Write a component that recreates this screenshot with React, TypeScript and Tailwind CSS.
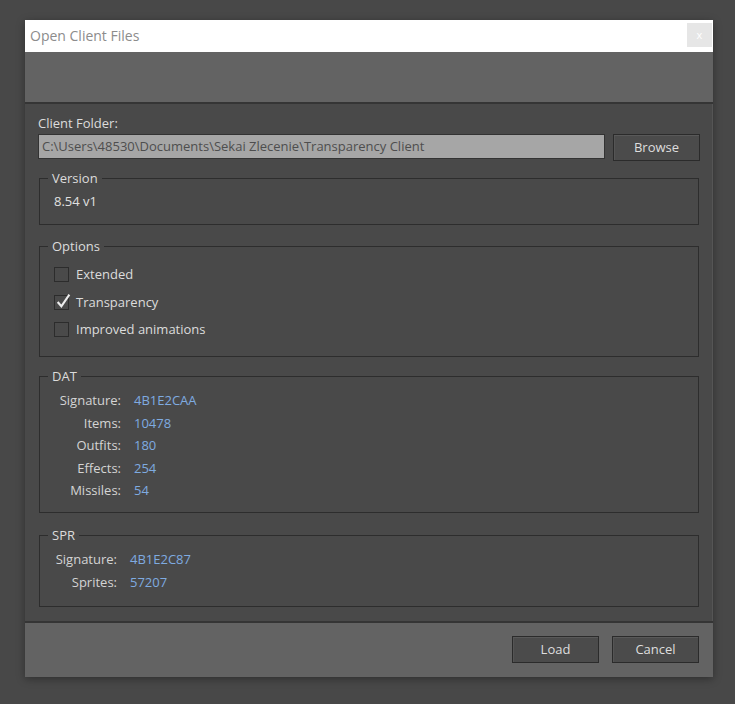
import React from "react";

const font = { fontFamily: '"Open Sans", "Noto Sans", "Liberation Sans", sans-serif' };

function Check({ checked, label }: { checked?: boolean; label: string }) {
  return (
    <div className="flex h-[27.5px] items-center">
      <div className="relative ml-[14px] flex h-[15px] w-[15px] items-center justify-center border border-[#2c2c2c] bg-[#4a4a4a]">
        {checked && (
          <svg viewBox="0 0 16 16" className="absolute -top-[3px] left-0 h-[17px] w-[17px]">
            <path d="M2.5 8.5 L6 12.5 L13.5 1.5" fill="none" stroke="#ececec" strokeWidth="2" strokeLinejoin="miter" />
          </svg>
        )}
      </div>
      <span className="ml-[7px] text-[13px] text-[#dcdcdc]">{label}</span>
    </div>
  );
}

function Group({ title, children, className }: { title: string; children: React.ReactNode; className?: string }) {
  return (
    <fieldset className={`ml-px mr-px border border-[#2d2d2d] ${className ?? ""}`}>
      <legend className="ml-[8px] px-[4px] text-[13px] leading-[18px] text-[#dcdcdc]">{title}</legend>
      {children}
    </fieldset>
  );
}

function InfoRows({ rows, labelWidth }: { rows: [string, string][]; labelWidth: string }) {
  return (
    <div className={`grid ${labelWidth} gap-x-[13px]`}>
      {rows.map(([k, v]) => (
        <React.Fragment key={k}>
          <div className="h-[22.5px] text-right text-[13px] leading-[22.5px] text-[#d4d4d4]">{k}</div>
          <div className="h-[22.5px] text-[13px] leading-[22.5px] text-[#7fabe0]">{v}</div>
        </React.Fragment>
      ))}
    </div>
  );
}

function Button({ children }: { children: React.ReactNode }) {
  return (
    <button className="h-[27px] w-[87px] border border-[#2b2b2b] bg-[#4b4b4b] text-[13px] text-[#dedede] shadow-[inset_0_1px_0_#595959,inset_1px_0_0_#555555]">
      {children}
    </button>
  );
}

export default function App() {
  return (
    <div className="min-h-[704px] bg-[#484848] pl-[25px] pt-[20px]" style={font}>
      <div className="w-[688px] shadow-[0_2px_8px_rgba(0,0,0,0.35)]">
        <div className="flex h-[32px] items-start justify-between bg-white">
          <span className="pl-[5px] pt-[6px] text-[14px] leading-[20px] text-[#8c8c8c]">Open Client Files</span>
          <div className="mr-px mt-[3px] flex h-[24px] w-[25px] items-center justify-center bg-[#e6e6e6] text-[11px] text-white">
            x
          </div>
        </div>
        <div className="h-[52px] border-b-2 border-[#353535] bg-[#636363]" />
        <div className="border-r border-[#555] bg-[#494949] pb-[14px] pl-[13px] pr-[12px] pt-[9px]">
          <div className="text-[13px] leading-[20px] text-[#dcdcdc]">Client Folder:</div>
          <div className="mt-px flex gap-[8px]">
            <div className="flex h-[25px] flex-1 items-center border border-[#333] bg-[#a6a6a6] pl-[3px] text-[13px] text-[#4e4e4e]">
              C:\Users\48530\Documents\Sekai Zlecenie\Transparency Client
            </div>
            <Button>Browse</Button>
          </div>

          <Group title="Version" className="mt-[8px] h-[56px]">
            <div className="pl-[14px] pt-[5px] text-[13px] leading-[18px] text-[#e0e0e0]">8.54 v1</div>
          </Group>

          <Group title="Options" className="mt-[12px] h-[120px]">
            <div className="pt-[6px]">
              <Check label="Extended" />
              <Check checked label="Transparency" />
              <Check label="Improved animations" />
            </div>
          </Group>

          <Group title="DAT" className="mt-[10px] h-[146px]">
            <div className="pt-[4px]">
              <InfoRows
                labelWidth="grid-cols-[81px_1fr]"
                rows={[
                  ["Signature:", "4B1E2CAA"],
                  ["Items:", "10478"],
                  ["Outfits:", "180"],
                  ["Effects:", "254"],
                  ["Missiles:", "54"],
                ]}
              />
            </div>
          </Group>

          <Group title="SPR" className="mt-[13px] h-[81px]">
            <div className="pt-[4px]">
              <InfoRows
                labelWidth="grid-cols-[77px_1fr]"
                rows={[
                  ["Signature:", "4B1E2C87"],
                  ["Sprites:", "57207"],
                ]}
              />
            </div>
          </Group>
        </div>
        <div className="flex h-[56px] items-start justify-end gap-[13px] border-t-2 border-[#353535] bg-[#636363] pr-[14px] pt-[13px]">
          <Button>Load</Button>
          <Button>Cancel</Button>
        </div>
      </div>
    </div>
  );
}
